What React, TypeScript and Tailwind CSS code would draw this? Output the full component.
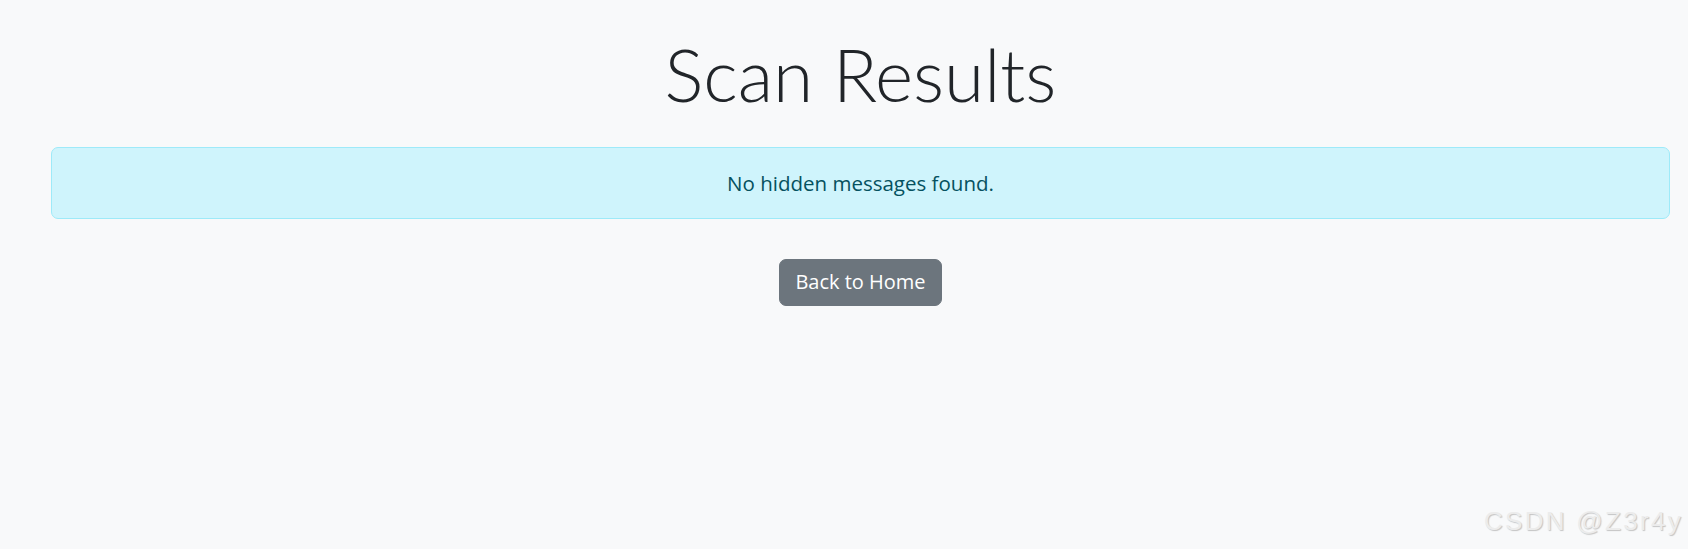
export default function App() {
  return (
    <div className="relative min-h-screen bg-[#f8f9fa] font-['Open_Sans','Liberation_Sans',sans-serif]">
      <div className="pl-[51px] pr-[18px] pt-[31px]">
        <h1 className="text-center font-['Lato','Open_Sans',sans-serif] text-[73px] font-light leading-[1.2] text-[#212529]">
          Scan Results
        </h1>

        <div className="mt-[28px] rounded-[7px] border border-[#9eeaf9] bg-[#cff4fc] p-[20px] text-center text-[20.5px] leading-[30px] text-[#055160]">
          No hidden messages found.
        </div>

        <div className="mt-[40px] flex justify-center">
          <button className="rounded-[7px] border border-[#6c757d] bg-[#6c757d] px-[15px] py-[7.5px] text-[20px] leading-[30px] text-white">
            Back to Home
          </button>
        </div>
      </div>

      {/* watermark */}
      <div className="absolute bottom-[15px] right-[5px] font-['Liberation_Sans',Arial,sans-serif] text-[26px] leading-none tracking-[2.3px] text-[#ececec] [text-shadow:1px_1px_1px_#c4c4c4]">
        CSDN @Z3r4y
      </div>
    </div>
  );
}
